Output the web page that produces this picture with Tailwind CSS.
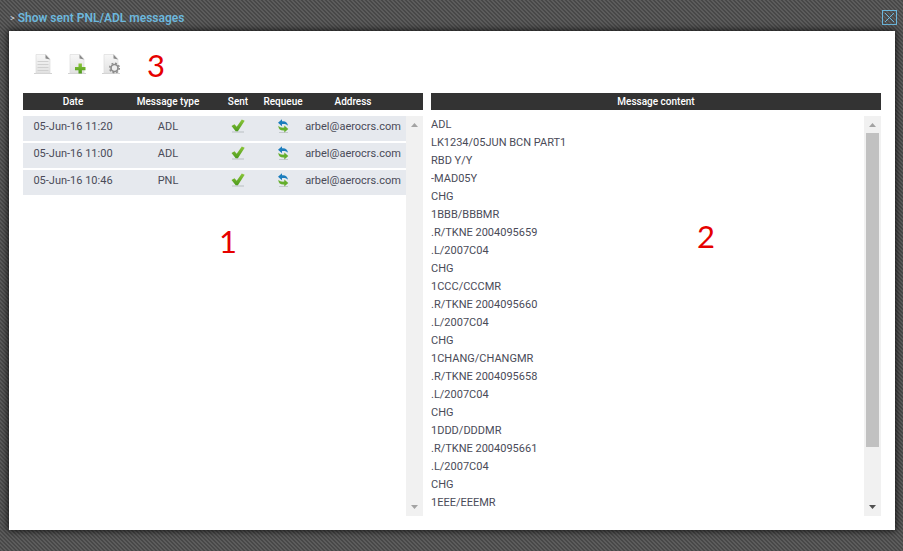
<!DOCTYPE html>
<html lang="en">
  <head>
    <meta charset="UTF-8" />
    <title>Show sent PNL/ADL messages</title>
    <meta name="viewport" content="width=device-width, initial-scale=1.0" />
    <script src="https://cdn.jsdelivr.net/npm/@tailwindcss/browser@4"></script>
  </head>
  <body
    class="flex flex-col h-screen overflow-hidden font-[Roboto,sans-serif] text-[11px] text-[#4a4b58] bg-[#505050] bg-[linear-gradient(45deg,#484848_25%,#5c5c5c_25%,#5c5c5c_50%,#484848_50%,#484848_75%,#5c5c5c_75%)] bg-[length:4px_4px]"
  >
    <!-- shared icons -->
    <svg class="absolute size-0" aria-hidden="true">
      <defs>
        <linearGradient id="paper" x1="0" y1="0" x2="0" y2="1">
          <stop offset="0" stop-color="#f7f7f7" />
          <stop offset="1" stop-color="#e2e2e2" />
        </linearGradient>
        <linearGradient id="leaf" x1="0" y1="0" x2="0" y2="1">
          <stop offset="0" stop-color="#8cc63a" />
          <stop offset="1" stop-color="#4c9a1c" />
        </linearGradient>
      </defs>
      <symbol id="page" viewBox="0 0 20 20">
        <path d="M1 19.5h18" stroke="#d2d2d2" stroke-width="1" />
        <path d="M3 .5h10l4 4.500v14H3z" fill="url(#paper)" stroke="#dcdcdc" stroke-width=".7" />
        <path d="M12.500.5l4.500 5-4.500-1z" fill="#8a8a8a" />
      </symbol>
      <symbol id="check" viewBox="0 0 16 16">
        <path d="M2 14h12" stroke="#b9bfc2" stroke-width="1" />
        <path d="M1.500 8l3-1.800 2.200 2.500L11.800 1.500l2.900 1.300L7.900 13.300H5.700z" fill="url(#leaf)" />
      </symbol>
      <symbol id="requeue" viewBox="0 0 16 16">
        <path d="M4 14.500h9" stroke="#c3c9cc" stroke-width="1" />
        <path d="M3 4.700L7 1.200v2c3.500-.4 5.700 1.200 6 4.600-1.300-1.500-3-2-6-1.700v2.100z" fill="#1b7dbd" />
        <path d="M13.300 11L9.300 7.600v2c-3 .2-4.700-.4-6-1.900.2 3.600 2.300 5.100 6 4.800v2z" fill="#64ae2c" />
      </symbol>
    </svg>

    <header class="flex items-center justify-between h-[31px] shrink-0 pt-1 pl-[10px] pr-[6px]">
      <h1 class="flex items-center gap-[3px] text-xs font-semibold text-[#6cb8de]">
        <span class="text-[9px] font-normal text-gray-300">&gt;</span>
        Show sent PNL/ADL messages
      </h1>
      <button type="button" aria-label="Close" class="text-[#6cb8de]">
        <svg class="block size-[15px]" viewBox="0 0 15 15" fill="none" stroke="currentColor">
          <rect x=".5" y=".5" width="14" height="14" />
          <path d="M3 3l9 9M12 3l-9 9" />
        </svg>
      </button>
    </header>

    <main
      class="relative flex flex-col flex-1 min-h-0 ml-[9px] mr-2 mb-[21px] px-[14px] pb-[14px] bg-white shadow-[0_0_7px_1px_rgba(0,0,0,0.75)]"
    >
      <nav class="flex items-center gap-[14px] h-[62px] shrink-0 pl-[10px] pt-1" aria-label="Message tools">
        <button type="button" aria-label="Show message">
          <svg class="block size-5" viewBox="0 0 20 20">
            <use href="#page" />
            <path d="M4.500 7.500h11M4.500 10.500h11M4.500 13.500h11M4.500 16.500h11" stroke="#d0d0d0" stroke-width="1" />
          </svg>
        </button>
        <button type="button" aria-label="Add message">
          <svg class="block size-5" viewBox="0 0 20 20">
            <use href="#page" />
            <path d="M11.500 9.500h3.400v3.400h3.600v3.400h-3.600v3.300h-3.400v-3.300H8v-3.400h3.500z" fill="url(#leaf)" />
          </svg>
        </button>
        <button type="button" aria-label="Message settings">
          <svg class="block size-5" viewBox="0 0 20 20" fill="none">
            <use href="#page" />
            <circle cx="13.500" cy="14" r="4.800" stroke="#8c8c8c" stroke-width="1.500" stroke-dasharray="1.900 1.870" />
            <circle cx="13.500" cy="14" r="3.500" fill="#eee" stroke="#8c8c8c" stroke-width="1.700" />
          </svg>
        </button>
      </nav>

      <div class="flex flex-1 gap-2 min-h-0">
        <section class="relative flex-8 min-w-0" aria-label="Sent messages">
          <table class="w-full table-fixed border-separate border-spacing-0 text-center">
            <colgroup>
              <col class="w-[25%]" />
              <col class="w-[22.5%]" />
              <col class="w-[12.5%]" />
              <col class="w-[10%]" />
              <col class="w-[25%]" />
              <col />
            </colgroup>
            <thead class="bg-[#333] text-[10px] leading-[17px] text-white">
              <tr>
                <th class="p-0 font-medium">Date</th>
                <th class="p-0 font-medium">Message type</th>
                <th class="p-0 font-medium">Sent</th>
                <th class="p-0 font-medium">Requeue</th>
                <th class="p-0 font-medium">Address</th>
                <td></td>
              </tr>
            </thead>
            <tbody id="message-rows" class="before:block before:h-[6px]"></tbody>
          </table>

          <div class="absolute top-[23px] right-0 bottom-0 flex flex-col justify-between w-[17px] bg-[#f1f1f1] text-[#a3a3a3]">
            <button type="button" aria-label="Scroll list up">
              <svg class="block size-[17px]" viewBox="0 0 17 17" fill="currentColor"><path d="M5 11l3.500-4 3.500 4z" /></svg>
            </button>
            <button type="button" aria-label="Scroll list down">
              <svg class="block size-[17px]" viewBox="0 0 17 17" fill="currentColor"><path d="M5 6l3.500 4L12 6z" /></svg>
            </button>
          </div>
        </section>

        <section class="flex flex-col flex-9 gap-[6px] min-w-0">
          <h2 class="bg-[#333] text-center text-[10px] leading-[17px] font-medium text-white">Message content</h2>
          <div class="flex flex-1 min-h-0">
            <pre id="message-content" class="flex-1 overflow-hidden font-[Roboto,sans-serif] leading-[18px]"></pre>
            <div class="flex flex-col w-[17px] bg-[#f1f1f1]">
              <button type="button" aria-label="Scroll content up" class="text-[#a3a3a3]">
                <svg class="block size-[17px]" viewBox="0 0 17 17" fill="currentColor"><path d="M5 11l3.500-4 3.500 4z" /></svg>
              </button>
              <div class="flex-1 px-[2px]">
                <div class="h-6/7 bg-[#c1c1c1]"></div>
              </div>
              <button type="button" aria-label="Scroll content down" class="text-[#505050]">
                <svg class="block size-[17px]" viewBox="0 0 17 17" fill="currentColor"><path d="M5 6l3.500 4L12 6z" /></svg>
              </button>
            </div>
          </div>
        </section>
      </div>

      <!-- numbered callouts -->
      <span class="absolute top-[18px] left-[138px] font-[Lato,sans-serif] text-[31px] leading-8 text-[#e60000]">3</span>
      <span class="absolute top-[194px] left-[210px] font-[Lato,sans-serif] text-[31px] leading-8 text-[#e60000]">1</span>
      <span class="absolute top-[189px] left-[688px] font-[Lato,sans-serif] text-[31px] leading-8 text-[#e60000]">2</span>
    </main>

    <script>
      const messages = [
        { date: "05-Jun-16 11:20", type: "ADL", address: "arbel@aerocrs.com" },
        { date: "05-Jun-16 11:00", type: "ADL", address: "arbel@aerocrs.com" },
        { date: "05-Jun-16 10:46", type: "PNL", address: "arbel@aerocrs.com" },
      ];

      const content = [
        "ADL",
        "LK1234/05JUN BCN PART1",
        "RBD Y/Y",
        "-MAD05Y",
        "CHG",
        "1BBB/BBBMR",
        ".R/TKNE 2004095659",
        ".L/2007C04",
        "CHG",
        "1CCC/CCCMR",
        ".R/TKNE 2004095660",
        ".L/2007C04",
        "CHG",
        "1CHANG/CHANGMR",
        ".R/TKNE 2004095658",
        ".L/2007C04",
        "CHG",
        "1DDD/DDDMR",
        ".R/TKNE 2004095661",
        ".L/2007C04",
        "CHG",
        "1EEE/EEEMR",
      ];

      const rows = document.getElementById("message-rows");

      messages.forEach((message) => {
        const tr = document.createElement("tr");
        tr.className = "h-[27px] bg-[#e6e9ee] align-top leading-[22px]";
        tr.innerHTML = `
          <td class="p-0 border-b-2 border-white">${message.date}</td>
          <td class="p-0 border-b-2 border-white">${message.type}</td>
          <td class="p-0 border-b-2 border-white">
            <svg class="block size-4 mx-auto mt-[2px]" role="img" aria-label="Sent"><use href="#check" /></svg>
          </td>
          <td class="p-0 border-b-2 border-white">
            <button type="button" aria-label="Requeue" class="block mx-auto mt-[2px]">
              <svg class="block size-4"><use href="#requeue" /></svg>
            </button>
          </td>
          <td class="p-0 border-b-2 border-white whitespace-nowrap">${message.address}</td>
          <td class="p-0 border-b-2 border-white"></td>`;
        rows.appendChild(tr);
      });

      document.getElementById("message-content").textContent = content.join("\n");
    </script>
  </body>
</html>
